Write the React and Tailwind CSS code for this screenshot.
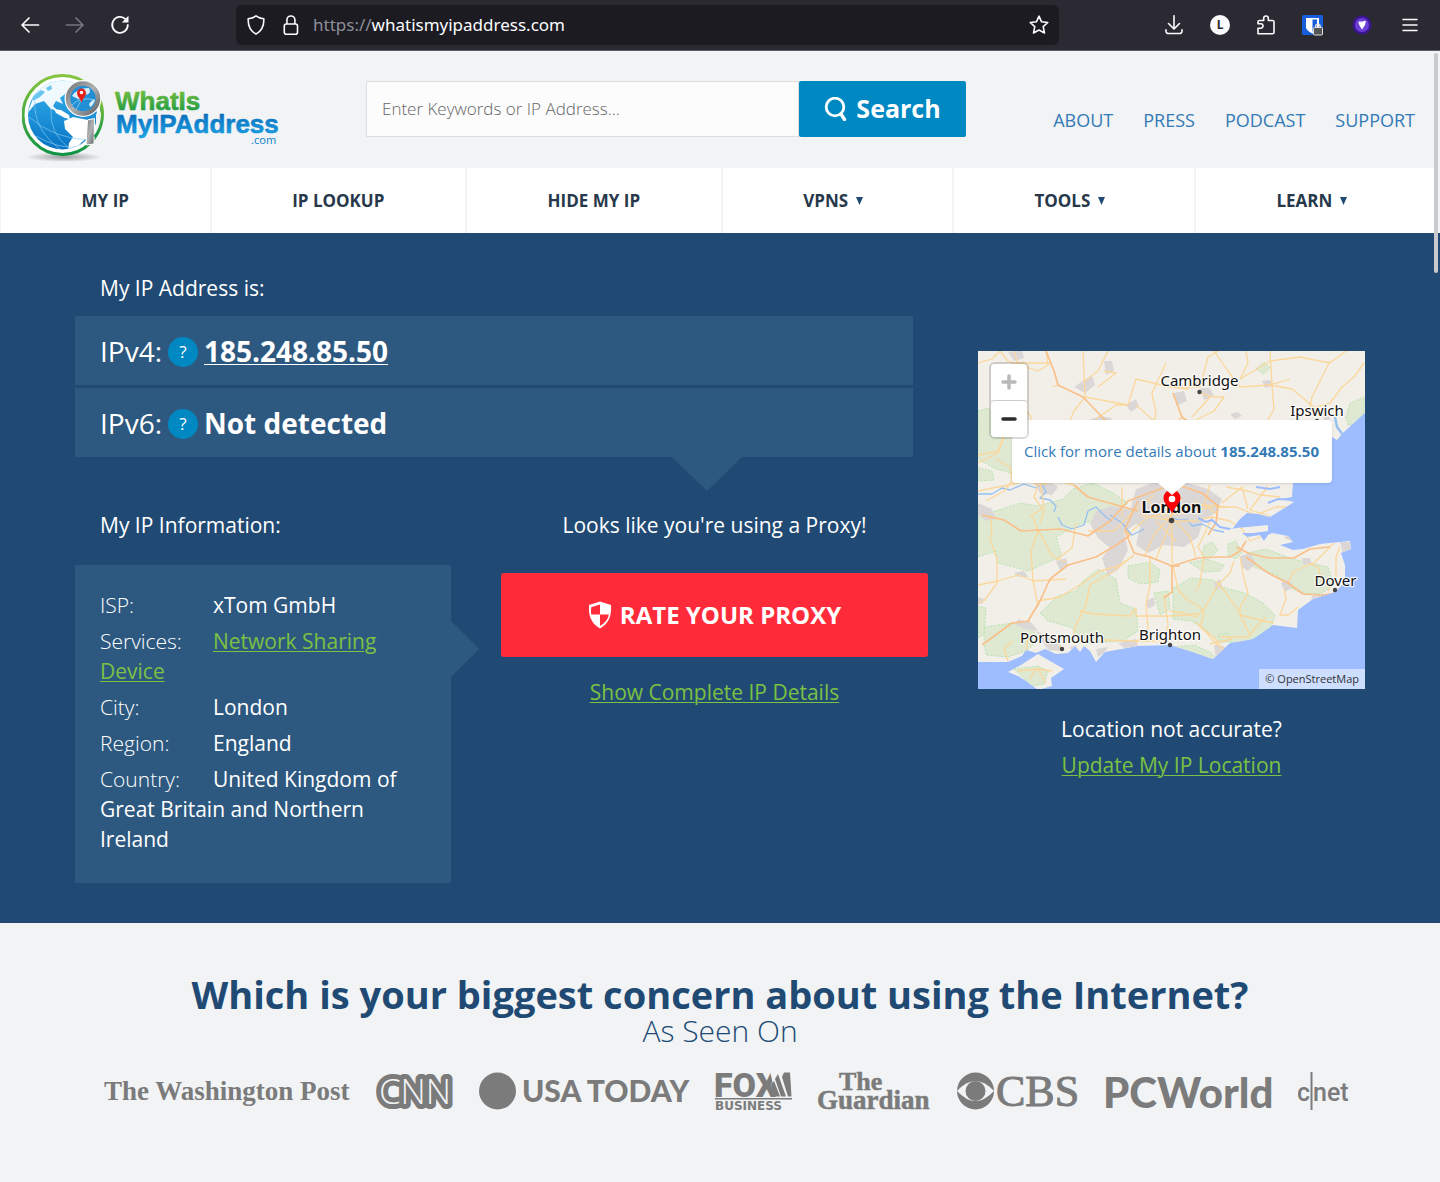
import React from "react";

const SANS = "font-['Open_Sans','Noto_Sans',sans-serif]";

function BrowserBar() {
  return (
    <div className="flex h-[51px] items-center border-b border-[#5b5a6b] bg-[#2b2a33] font-['Noto_Sans',sans-serif] text-[#fbfbfe]">
      <div className="flex w-[236px] shrink-0 items-center gap-[25px] pl-5">
        <button aria-label="Back" className="size-5">
          <svg viewBox="0 0 20 20" fill="none" stroke="currentColor" strokeWidth="1.7" strokeLinecap="round" strokeLinejoin="round">
            <path d="M18.500 10H2M9 3L2 10l7 7" />
          </svg>
        </button>
        <button aria-label="Forward" className="size-5 text-[#77767f]">
          <svg viewBox="0 0 20 20" fill="none" stroke="currentColor" strokeWidth="1.7" strokeLinecap="round" strokeLinejoin="round">
            <path d="M1.500 10H18M11 3l7 7-7 7" />
          </svg>
        </button>
        <button aria-label="Reload" className="size-5">
          <svg viewBox="0 0 20 20" fill="none" stroke="currentColor" strokeWidth="1.8" strokeLinecap="round">
            <path d="M15.500 4.200A7.800 8 0 1 0 17.800 10" />
            <path d="M18.500 .8v6.700h-6.700z" fill="currentColor" stroke="none" />
          </svg>
        </button>
      </div>
      <div className="flex h-10 min-w-0 flex-1 items-center rounded-md bg-[#1c1b22] px-[10px]">
        <svg className="size-5 shrink-0" viewBox="0 0 20 20" fill="none" stroke="currentColor" strokeWidth="1.600" strokeLinejoin="round">
          <path d="M10 .9c2.300 1.800 5 2.600 7.800 2.900.3 6.800-2 12.200-7.800 15.300C4.200 16 1.900 10.600 2.200 3.800 5 3.500 7.700 2.700 10 .9z" />
        </svg>
        <svg className="ml-[15px] size-5 shrink-0" viewBox="0 0 20 20" fill="none" stroke="currentColor" strokeWidth="1.600">
          <rect x="3.300" y="9" width="13.200" height="10.200" rx="2" />
          <path d="M5.900 9V5a4 4 0 0 1 8 0v4" />
        </svg>
        <div className="ml-3 flex-1 truncate text-[17px] leading-6">
          <span className="text-[#8f8e99]">https://</span>whatismyipaddress.com
        </div>
        <button aria-label="Bookmark this page" className="size-5 shrink-0">
          <svg viewBox="0 0 20 20" fill="none" stroke="currentColor" strokeWidth="1.600" strokeLinejoin="round">
            <path d="M10 1.200l2.600 5.600 6.200.7-4.600 4.200 1.300 6.300L10 15l-5.500 3 1.300-6.300L1.200 7.500l6.200-.7z" />
          </svg>
        </button>
      </div>
      <div className="flex shrink-0 items-center gap-[26px] pl-[105px] pr-5">
        <button aria-label="Downloads" className="size-5">
          <svg viewBox="0 0 20 20" fill="none" stroke="currentColor" strokeWidth="1.600" strokeLinecap="round" strokeLinejoin="round">
            <path d="M10 .8v13M4.500 8.500l5.500 5.500 5.500-5.500M2 14.800v1.400a2.300 2.300 0 0 0 2.300 2.300h11.400a2.300 2.300 0 0 0 2.300-2.300v-1.400" />
          </svg>
        </button>
        <button aria-label="Account" className="size-5 rounded-full bg-[#fbfbfe] text-[12px] font-bold leading-5 text-[#2b2a33]">L</button>
        <button aria-label="Extensions" className="size-5">
          <svg viewBox="0 0 20 20" fill="none" stroke="currentColor" strokeWidth="1.600" strokeLinejoin="round">
            <path d="M2 18.700V13.200h2.800a2.200 2.200 0 0 0 0-4.400H2V7a1.500 1.500 0 0 1 1.500-1.500h4.200V3.300a2.300 2.300 0 0 1 4.600 0v2.200h4.200A1.500 1.500 0 0 1 18 7v10.200a1.500 1.500 0 0 1-1.500 1.500z" />
          </svg>
        </button>
        <button aria-label="Password manager" className="size-[21px]">
          <svg viewBox="0 0 21 21">
            <rect width="21" height="20" rx="1.500" fill="#175ddc" />
            <path d="M4 3h13v9c0 3-4 5.500-6.500 6.500C8 17.500 4 15 4 12z" fill="#fff" />
            <path d="M10.500 4.500H15V12c0 1.500-2 3.200-4.500 4.500z" fill="#175ddc" />
            <rect x="11.500" y="12.500" width="9" height="7.500" rx="1" fill="#555" stroke="#ddd" />
            <path d="M13.600 12.500v-1a2.300 2.300 0 0 1 4.600 0v1" fill="none" stroke="#ddd" strokeWidth="1.400" />
          </svg>
        </button>
        <button aria-label="VPN extension" className="ml-[3px] size-5">
          <svg viewBox="0 0 20 20">
            <circle cx="10" cy="10" r="9.500" fill="#3b1693" />
            <circle cx="10" cy="10" r="7" fill="#6c3fd6" />
            <path d="M6.800 7q3.500.6 6.600-.8-.3 4.400-3.400 7.600Q7.600 10.600 6.800 7z" fill="#fff" stroke="#fff" strokeLinejoin="round" />
          </svg>
        </button>
        <button aria-label="Application menu" className="ml-0.5 size-5">
          <svg viewBox="0 0 20 20" fill="none" stroke="currentColor" strokeWidth="1.500" strokeLinecap="round">
            <path d="M3 4.500h14M3 10h14M3 15.500h14" />
          </svg>
        </button>
      </div>
    </div>
  );
}

function SiteLogo() {
  return (
    <a href="#home" aria-label="WhatIsMyIPAddress.com" className="block w-[260px] shrink-0">
      <svg viewBox="0 0 260 90" className="h-[90px] w-[260px]">
        <defs>
          <linearGradient id="lgGreen" x1="0" y1="0" x2="0" y2="1">
            <stop offset="0" stopColor="#86c440" />
            <stop offset="1" stopColor="#0f9444" />
          </linearGradient>
          <linearGradient id="lgBlue" x1="0" y1="0" x2="0" y2="1">
            <stop offset="0.150" stopColor="#0b6fbd" />
            <stop offset="1" stopColor="#1ba4e6" />
          </linearGradient>
          <linearGradient id="lgSea" x1="0" y1="0" x2="0" y2="1">
            <stop offset="0" stopColor="#35b3ee" />
            <stop offset="1" stopColor="#0873c4" />
          </linearGradient>
          <linearGradient id="lgMetal" x1="0" y1="0" x2="1" y2="1">
            <stop offset="0" stopColor="#75777a" />
            <stop offset="0.500" stopColor="#b0b2b4" />
            <stop offset="1" stopColor="#606265" />
          </linearGradient>
          <radialGradient id="lgShadow">
            <stop offset="0" stopColor="#777" stopOpacity="0.700" />
            <stop offset="1" stopColor="#777" stopOpacity="0" />
          </radialGradient>
          <clipPath id="globeClip"><circle cx="40.500" cy="41" r="34.500" /></clipPath>
        </defs>
        <ellipse cx="42" cy="83" rx="38" ry="5" fill="url(#lgShadow)" />
        <circle cx="40.500" cy="41" r="39.500" fill="#fff" stroke="url(#lgGreen)" strokeWidth="3" />
        <circle cx="40.500" cy="41" r="34.500" fill="url(#lgSea)" />
        <g clipPath="url(#globeClip)">
          <path d="M10 27Q14 13 27 7 42 2 56 8L47 15 43 20 38 24 41 30 34 27 31 32 36 37 29 35 22 27 13 30 5 40z" fill="#fff" opacity="0.930" />
          <path d="M11 22l8-6 4 2-5 5-7 4zM24 14l5-3 1 4-4 2z" fill="#6cc5ef" />
          <path d="M32 35l7 1 8 5 1 4-5-1-9-5z" fill="#fff" />
          <path d="M42 47l9-4 15 3 10 6-8 10-8 6-9 10-5-1 1-8 4-6-8-8z" fill="#fff" />
          <g fill="none" stroke="#8bd0f3" strokeWidth="0.800" opacity="0.800">
            <path d="M7 43q25 22 60 23M14 62q22 13 42 11M13 27q-2 28 25 48M29 35q-2 24 18 39" />
          </g>
        </g>
        <path d="M74 40l12-4v32l-12 4z" fill="#f1f3f5" />
        <path d="M65.500 46l7-1.500L72 70l-8 1z" fill="url(#lgMetal)" stroke="#fff" strokeWidth="1" />
        <path d="M78 26A39.500 39.500 0 0 1 73 63" fill="none" stroke="url(#lgGreen)" strokeWidth="3" />
        <circle cx="61" cy="24.500" r="18.500" fill="#fff" />
        <circle cx="61" cy="24.500" r="15" fill="#218fd5" stroke="url(#lgMetal)" strokeWidth="4.500" />
        <path d="M50 22q5-8 17-8 3 6-4 7-2 5-7 4zM67 30q4-5 6-4-2 6-5 7z" fill="#d9effa" />
        <path d="M50 31q9-9 23-5M54 36q5-12 14-21" fill="none" stroke="#a9dcf5" strokeWidth="0.700" />
        <path d="M59.500 29c-1-5-4.500-6-4.500-10a4.500 4.500 0 0 1 9 0c0 4-3.500 5-4.500 10z" fill="#e32119" />
        <circle cx="59.500" cy="18.500" r="1.800" fill="#fff" />
        <g fontFamily="Liberation Sans, Arial, sans-serif" fontWeight="700" strokeWidth="0.600" strokeLinejoin="round">
          <text x="93" y="36" fontSize="26" fill="url(#lgGreen)" stroke="url(#lgGreen)">WhatIs</text>
          <text x="94" y="59" fontSize="26" fill="url(#lgBlue)" stroke="url(#lgBlue)">MyIPAddress</text>
        </g>
        <text x="229" y="70" fontSize="11" fontFamily="Noto Sans, sans-serif" fill="#1587cf">.com</text>
      </svg>
    </a>
  );
}

function Header() {
  return (
    <header className="flex h-[117px] items-start bg-[#f1f3f5]">
      <div className="pl-[22px] pt-[23px]">
        <SiteLogo />
      </div>
      <form className="ml-[84px] mt-[30px] flex h-14 max-w-[600px] flex-1" onSubmit={(e) => e.preventDefault()}>
        <input
          aria-label="Enter Keywords or IP Address"
          placeholder="Enter Keywords or IP Address..."
          className="min-w-0 flex-1 border border-[#dddddd] bg-[#fcfcfc] px-[15px] text-[17px] font-light text-[#333] placeholder:text-[#666]"
        />
        <button className="flex w-[167px] items-center justify-center gap-2 rounded-[2px] bg-[#0088c2] text-[25px] font-bold text-white">
          <svg className="size-6" viewBox="0 0 24 24" fill="none" stroke="currentColor" strokeLinecap="round">
            <ellipse cx="11" cy="10" rx="8.800" ry="8.800" strokeWidth="2.800" />
            <path d="M17 17l3.500 5.500" strokeWidth="3.400" />
          </svg>
          Search
        </button>
      </form>
      <nav aria-label="Secondary" className="ml-auto flex gap-[30px] pr-[25px] pt-[57px] text-[18px] font-medium leading-6 text-[#337ab7]">
        <a href="#about">ABOUT</a>
        <a href="#press">PRESS</a>
        <a href="#podcast">PODCAST</a>
        <a href="#support">SUPPORT</a>
      </nav>
    </header>
  );
}

const MENU = [
  ["MY IP", false],
  ["IP LOOKUP", false],
  ["HIDE MY IP", false],
  ["VPNS", true],
  ["TOOLS", true],
  ["LEARN", true],
];

function MainNav() {
  return (
    <nav aria-label="Main" className="flex h-[65px] gap-0.5 bg-[#f1f3f5] px-px pr-1 text-[17px] font-bold text-[#27384b]">
      {MENU.map(([label, menu]) => (
        <a key={label} href="#menu" className="flex flex-auto items-center justify-center bg-white pt-px">
          {label}
          {menu && (
            <svg className="ml-2 mr-2 h-2 w-[7px] text-[#204a73]" viewBox="0 0 7 8">
              <path d="M0 0h7L3.500 8z" fill="currentColor" />
            </svg>
          )}
        </a>
      ))}
    </nav>
  );
}

function Help({ label }) {
  return (
    <button aria-label={label} className="mx-1.5 mt-0.5 size-[30px] rounded-full bg-[#0088c2] text-[17px] leading-[30px]">?</button>
  );
}

function InfoRow({ label, children }) {
  return (
    <p>
      <span className="inline-block w-[113px] font-light">{label}</span>
      {children}
    </p>
  );
}

const GREENS = [
  "M0 60L10 57 22 70 40 82 50 108 34 122 18 118 0 108z",
  "M0 117l14 3 2 9-16 1z",
  "M18 160L42 152 60 155 85 148 95 138 115 132 135 142 150 152 130 168 104 172 78 186 84 205 50 220 20 212 18 200 0 206 0 166z",
  "M62 262L80 245 98 240 105 230 120 218 138 228 142 252 158 258 160 280 145 290 110 292 92 276 70 270z",
  "M6 276L35 272 52 276 62 288 48 300 30 306 8 304 6 290z",
  "M150 215l22-4 10 8-2 12-18 2-12-6z",
  "M0 255l8 2-2 26-6 4z",
  "M195 237l18-10 22 2 12 8 20 5 18 10 12 12-4 12-14 10-16 6-24-2-12-12-14-8-18-2z",
  "M212 212l16-4 18 6-4 6-16 1z",
  "M250 193l8-3 6 12-6 6-8-4z",
  "M270 202l18-4 26 10 18 4 18 4 6 18-12 8-16 2-18-8-12-12-22-8z",
  "M196 296l20-2 18 8 3 6-8 0-33-8z",
  "M240 284l10-2 2 6-8 4z",
  "M368 66l4-14 14-6v16l-8 10-8 2z",
  "M278 18l8-7 6 6-6 6z",
  "M36 318l24-3 10 5-4 13-12 2-10-10z",
  "M226 195l8-4 6 8-8 8-8-2z",
  "M176 242l14-2 2 18-10 6z",
];

const URBAN = [
  "M158 138l22-8 30 2 20 6 14 10-6 14-12 6-6 18-14 10-20-2-16 8-12-8 4-18 -10-8 2-16z",
  "M118 160l16-5 20 4 4 14-12 8 4 18-10 20-10 6-6-18 8-10-12-10 -8-14z",
  "M56 132l12-4 12 8-6 8-12-2z",
  "M30 1l14-2 2 8-10 3z",
  "M96 36l18-12 3 10-10 8z",
  "M126 10l8 0 2 10-8 4z",
  "M148 54l10-6 3 7-8 6z",
  "M108 70l14-5 12 2-8 10-14 0z",
  "M222 37l10 0 4 8-10 4z",
  "M284 30l8-1 3 6-8 2z",
  "M0 152l14 6 4 10-10 2-8-6z",
  "M78 210l10-3 2 8-8 4z",
  "M40 268l14 4 6 8-14-2-8-4z",
  "M58 280l20 8 6 12-14-1z",
  "M36 222l10-2 4 6-10 0z",
  "M0 246l6 2-2 5-4 0z",
  "M140 292l18-4 2 8-14 1z",
  "M118 298l12-2-4 6-6 4z",
  "M262 205l10-3 6 10-8 8-6-4z",
  "M303 232l8-4 4 8-8 5z",
  "M324 207l8 0 2 5-8 2z",
  "M236 232l6-4 2 8-6 3z",
  "M362 191l10 0 1 8-8 4z",
  "M236 294l10 1 2 7-10 6z",
  "M334 245l12-2-4 5-9 3z",
  "M206 146l14-2 8 8-10 8z",
  "M196 42l10-2 3 10-9 4z",
  "M252 63l8-2 4 4-7 3z",
  "M168 250l8-4 1 8-7 4z",
  "M92 296l6-2 2 5-6 2z",
  "M345 66l6-2 2 6-6 2z",
  "M312 182l8 1-6 7-8-3z",
];

const MOTORWAYS = [
  "M4 164L26 169 43 180 83 178 110 185 132 170 150 150 190 135",
  "M50 270L62 250 72 228 90 214 118 206 140 193 152 184 147 178 160 150",
  "M147 180L156 202 172 206 194 215 220 207 240 206 252 206 262 200 268 190",
  "M68 0L76 20 80 34 105 46 126 68 150 90",
  "M268 206L290 222 310 232 325 243 345 244 357 242",
  "M194 215l0 26-8 6 M192 215l10 0",
  "M258 196L270 202 290 207 316 207 332 198 352 196",
  "M195 42L204 66 212 72 M200 134L224 142 240 155 238 172 230 184",
  "M96 134L110 146 124 150 160 160",
  "M52 270l-18 2-30 22",
];

const ROADS = [
  "M0 12L14 8 22 0 M22 0L30 10 60 20 70 14 68 0",
  "M12 164L14 180 12 188 19 208 19 232 6 250 0 252 M0 234L20 230 40 224 56 230 88 228",
  "M55 166L60 180 53 200 55 230 60 254 50 270 M58 175l16 30 14 6",
  "M98 172l-4 25-16 12",
  "M60 250L82 246 105 232 122 220 140 215 155 205",
  "M28 36L52 64 60 100 62 132 66 156 52 166",
  "M80 34L74 36 M36 0l8 28 4 42 8 12 M40 12l32 0",
  "M105 0L107 46 96 60 90 74 M107 30L120 20 130 0",
  "M120 36L138 22 126 20 M107 46L150 54 158 28 192 36 210 38 220 30",
  "M150 54l-12 0-20 14 M158 54l18 16 2-8-4-20 14-30",
  "M0 104l20-4 6-16 12-10 M0 112l20-10 8-22 20-18",
  "M18 108l14 8 2 14-8 10-18 10 M0 140l30-6 20-4 10 4 20-4 16 4",
  "M60 134l-4 12 10 14-4 12 M110 180l26 0 20-20 20-16",
  "M144 166l0-30 M154 180l16-14 20-4 36-8 24 2",
  "M156 204l-20 16-24 14-4 20-10 20-4 16",
  "M102 260l14 3 36 2 6-8 0 8 34 0 28-2 ",
  "M172 204l0 30-4 20 2 24-12 14",
  "M125 289l30 1 36 0",
  "M186 244l4 30-4 18 M192 260l14 2 12 4 8-8 14-24 12-12 4-12",
  "M194 166l0 44 6 28 8 10 14 8 4 6-4 14 14 10 10 14",
  "M194 170l20 0 20-4 18 4 12 8",
  "M182 150l10 14 20 22 6 20 M204 146l-10 18-18 20-10 22 M194 164l40-8",
  "M162 164l30 5 M170 150l20 18 M178 208l16-40 M220 150l-26 14 M178 170l20 20",
  "M234 166l-8 18-6 12 6 10-4 26-4 8 M240 156l18 0 20 8 20-8 16 0",
  "M232 134l-6 20 14 10 M248 136l22 4 12 4 20 2",
  "M244 152l20-16 6 22 M290 135l-18 24 20 6",
  "M262 206l4 22 4 14-8 14 0 8 10 20 M238 230l10 12 14 20",
  "M264 178l8 12 20-8 8-10 M242 286l28 0 8-10 10-10",
  "M262 264l24 6 10 2 M306 238l2 10-6 16 8 0 10-8 M310 232l6-12 20-8 20-20",
  "M240 295l-12-14-10-10 M232 293l22-5",
  "M362 196l-4 10 0 20-8 14 M330 212l10 4 4 14",
  "M192 36L222 36 230 6 240 0 M236 0l14 20 12 16 30-2 22 4 24 20",
  "M262 28l30-18 30-4 30 6 16-12 M292 0l2 34 2 24-8 14 M352 10l-18 36-4 20",
  "M232 46l-18 20 M222 42l14 4 10 0 -10 14-20 10",
  "M204 66l-4 4 M338 56l14-4 12-16 12-10 10-14 M262 28l8-16-2-12",
  "M30 310l-4-12 8-8 M84 300l-4-10-10-6 M48 300l2-14",
  "M40 320l20-2 14 2 M60 318l8 14 M58 318l-6 10",
  "M338 62l10 4 M292 34l20-6",
];

const PLACES = [
  ["Cambridge", 221.500, 35, 221.500, 41],
  ["Ipswich", 339, 65, 339, 70],
  ["Dover", 357.500, 235, 357, 239],
  ["Portsmouth", 84, 292, 84, 298],
  ["Brighton", 192, 289, 192, 294],
];

function MapArt() {
  return (
    <svg viewBox="0 0 387 338" preserveAspectRatio="xMidYMid slice" className="size-full" role="img" aria-label="Map of south-east England">
      <defs>
        <clipPath id="landClip">
          <path d="M0 0H387V62L382 66 365 82 359 89 354 86 345 100 330 118 315 132 314 146 303 148 316 151 305 158 292 166 280 163 269 162 262 168 255 177 245 179 259 177 290 174 290 180 276 182 264 182 269 186 282 184 286 190 290 184 294 182 310 185 315 191 302 194 315 199 325 198 342 193 372 190 373 198 363 202 367 214 367 231 357 241 335 248 320 259 319 277 295 274 275 288 252 292 235 308 212 300 192 294 160 295 127 301 118 311 112 300 106 295 102 301 97 295 90 302 78 303 67 298 58 302 48 299 44 305 30 311 0 311z" />
          <path d="M30 321l13-7 17-11 12 7 14 8-13 9 1 8-14 4-12-9-8-5z" />
        </clipPath>
      </defs>
      <rect width="387" height="338" fill="#9dbdff" />
      <g clipPath="url(#landClip)">
        <rect width="387" height="338" fill="#f2efe9" />
        <g fill="#dfe9d2" stroke="#a9dfa5" strokeWidth="0.800" strokeDasharray="2 1.500">
          {GREENS.map((d) => <path key={d} d={d} />)}
        </g>
        <g fill="#dcd7d7">
          {URBAN.map((d) => <path key={d} d={d} />)}
        </g>
        <g fill="none" stroke="#94c0f2" strokeWidth="1.300" strokeLinejoin="round">
          <path d="M0 143l14 0 10-6 8 2 14-6 12 4 6-4 4 8-6 6 10 2 6 6-2 6 M80 166l4 8 10 4 12-4 4-14 8-4 10 10 6 4 M132 164l12 8 10 12 12-6 M192 165l8 4 10 0 4 6 10-2 12 6 10 2" />
          <path d="M357 66l2 10 6 8" strokeWidth="2.500" />
        </g>
        <g fill="none" stroke="#fbd79b" strokeWidth="1.300" strokeLinejoin="round">
          {ROADS.map((d) => <path key={d} d={d} />)}
        </g>
        <g fill="none" stroke="#f9c089" strokeWidth="1.700" strokeLinejoin="round">
          {MOTORWAYS.map((d) => <path key={d} d={d} />)}
        </g>
      </g>
      <g fill="none" stroke="#9dbdff" strokeWidth="2">
        <path d="M220 167l8 4 6-2 8 7 10 2 M290 152l10-4 18 1 M278 136l14 2 10-2" />
      </g>
      <g fontFamily="Noto Sans, sans-serif" fontSize="15" textAnchor="middle" fill="#111" stroke="#fff" strokeWidth="2.500" strokeOpacity="0.800" strokeLinejoin="round" paintOrder="stroke">
        {PLACES.map(([name, x, y, dx, dy]) => (
          <g key={name}>
            <circle cx={dx} cy={dy} r="2.200" fill="#444" stroke="none" />
            <text x={x} y={y}>{name}</text>
          </g>
        ))}
        <circle cx="193.500" cy="169.500" r="2.800" fill="#444" stroke="none" />
        <text x="193.500" y="162" fontSize="16" fontWeight="700">London</text>
      </g>
    </svg>
  );
}

function LocationMap() {
  return (
    <div className="relative h-[338px] overflow-hidden bg-[#9dbdff]">
      <MapArt />
      <svg className="absolute left-1/2 top-[138px] h-[26px] w-[18px] -translate-x-1/2" viewBox="0 0 18 26">
        <path d="M9 25C7 18 .5 15 .5 9a8.500 8.500 0 0 1 17 0c0 6-6.500 9-8.500 16z" fill="#fb0207" />
        <circle cx="9" cy="10" r="3.300" fill="#fff" />
      </svg>
      <div className="absolute left-1/2 top-[69px] w-80 -translate-x-1/2">
        <a href="#details" className="block whitespace-nowrap rounded bg-white text-center text-[15px] leading-[63px] text-[#337ab7] shadow-sm">
          Click for more details about <b>185.248.85.50</b>
        </a>
        <svg className="mx-auto block h-3 w-7" viewBox="0 0 28 12"><path d="M0 0h28L14 12z" fill="#fff" /></svg>
      </div>
      <div className="absolute left-[11px] top-[11px] w-10 rounded-md border-2 border-black/15">
        <button aria-label="Zoom in" className="flex h-9 w-full items-center justify-center rounded-t bg-white text-[#b9b9b9]">
          <svg className="size-4" viewBox="0 0 16 16" stroke="currentColor" strokeWidth="3.500" strokeLinecap="round"><path d="M2 8h12M8 2v12" /></svg>
        </button>
        <button aria-label="Zoom out" className="flex h-[37px] w-full items-center justify-center rounded border-t border-[#ccc] bg-white text-[#2b2b2b]">
          <svg className="size-4" viewBox="0 0 16 16" stroke="currentColor" strokeWidth="3.500" strokeLinecap="round"><path d="M2 8h12" /></svg>
        </button>
      </div>
      <a href="#osm" className="absolute bottom-0 right-0 bg-white/50 px-1.5 text-[11px] leading-5 text-[#333]">© OpenStreetMap</a>
    </div>
  );
}

const GREEN_LINK = "text-[#7bc143] underline decoration-1 underline-offset-2";

function Hero() {
  return (
    <section className="grid grid-cols-[minmax(0,853fr)_minmax(0,387fr)] gap-[50px] bg-[#204a73] px-[75px] pb-10 pt-10 text-[21px] leading-[30px] text-white">
      <div>
        <h2 className="pl-[25px]">My IP Address is:</h2>
        <div className="relative mr-[15px] mt-[13px] flex flex-col gap-[3px] text-[28px]">
          <p className="flex h-[69px] items-center bg-[#2d5980] pl-[25px]">
            IPv4:<Help label="What is IPv4?" />
            <a href="#ipv4" className="font-bold underline decoration-1 underline-offset-2">185.248.85.50</a>
          </p>
          <p className="flex h-[69px] items-center bg-[#2d5980] pl-[25px]">
            IPv6:<Help label="What is IPv6?" />
            <b>Not detected</b>
          </p>
          <svg className="absolute right-[171px] top-full h-[34px] w-[70px]" viewBox="0 0 70 34">
            <path d="M0 0h70L35 34z" fill="#2d5980" />
          </svg>
        </div>
        <div className="mt-[53px] grid grid-cols-[minmax(0,376fr)_minmax(0,427fr)] gap-[50px]">
          <div>
            <h2 className="pl-[25px]">My IP Information:</h2>
            <div className="relative mt-[25px] flex flex-col gap-1.5 bg-[#2d5980] px-[25px] pb-[29px] pt-[25px]">
              <InfoRow label="ISP:">xTom GmbH</InfoRow>
              <InfoRow label="Services:"><a href="#services" className={GREEN_LINK}>Network Sharing Device</a></InfoRow>
              <InfoRow label="City:">London</InfoRow>
              <InfoRow label="Region:">England</InfoRow>
              <InfoRow label="Country:">United Kingdom of Great Britain and Northern Ireland</InfoRow>
              <svg className="absolute left-full top-14 h-14 w-7" viewBox="0 0 28 56">
                <path d="M0 0v56L28 28z" fill="#2d5980" />
              </svg>
            </div>
          </div>
          <div className="flex flex-col items-center">
            <h2>Looks like you're using a Proxy!</h2>
            <button className="mt-[33px] flex h-[84px] w-full items-center justify-center gap-2 rounded-[3px] bg-[#ff2b3a] text-[24px] font-bold">
              <svg className="h-7 w-6" viewBox="0 0 24 28">
                <path d="M12 .5L23 4c.6 10-1.500 18-11 23.500C2.500 22 .4 14 1 4z" fill="#fff" />
                <path d="M12 3.500v10H3.200C3 11 3 9 3.200 6.200zM12 13.500h8.800C20 18.500 17 22 12 25z" fill="#ff2b3a" />
              </svg>
              RATE YOUR PROXY
            </button>
            <a href="#details" className={`mt-5 ${GREEN_LINK}`}>Show Complete IP Details</a>
          </div>
        </div>
      </div>
      <div className="pt-[78px] text-center">
        <LocationMap />
        <p className="mt-[25px]">Location not accurate?</p>
        <a href="#update" className={`mt-1.5 inline-block ${GREEN_LINK}`}>Update My IP Location</a>
      </div>
    </section>
  );
}

function PressLogos() {
  return (
    <ul className="flex flex-wrap items-center justify-center gap-[25px] pl-3.5 text-[#7b7b7b]">
      <li>
        <svg className="h-10 w-[247px]" viewBox="0 0 247 40" fill="currentColor">
          <text x="0" y="29" fontFamily="Liberation Serif, serif" fontWeight="700" fontSize="27">The Washington Post</text>
        </svg>
      </li>
      <li>
        <svg className="h-10 w-[78px]" viewBox="0 0 78 40" role="img" aria-label="CNN">
          <defs>
            <text id="cnn" x="39" y="33" textAnchor="middle" fontFamily="Open Sans, sans-serif" fontWeight="300" fontSize="35">CNN</text>
          </defs>
          <use href="#cnn" fill="#7b7b7b" stroke="#7b7b7b" strokeWidth="10" strokeLinejoin="round" />
          <use href="#cnn" fill="#f1f3f5" />
        </svg>
      </li>
      <li>
        <svg className="h-10 w-[211px]" viewBox="0 0 211 40" fill="currentColor">
          <circle cx="18.500" cy="20" r="18.500" />
          <text x="43" y="31" fontFamily="Lato, sans-serif" fontWeight="900" fontSize="30">USA TODAY</text>
        </svg>
      </li>
      <li>
        <svg className="h-10 w-[77px]" viewBox="0 0 77 40" fill="currentColor">
          <text x="-1" y="25.500" fontFamily="Roboto, sans-serif" fontWeight="900" fontSize="34">FOX</text>
          <path d="M55 0h22v27h-16z" fill="#f1f3f5" />
          <path d="M56 13l3-3 6 15.500h-8zM60 8l3-5 8 22.500h-5zM69 1.500h6l1.500 24H73L67 6z" />
          <path d="M0 27h77v1.500H0z" />
          <text x="0" y="39" fontFamily="DejaVu Sans, sans-serif" fontWeight="700" fontSize="12">BUSINESS</text>
        </svg>
      </li>
      <li>
        <svg className="h-10 w-[115px]" viewBox="0 0 115 40" fill="currentColor" stroke="currentColor" strokeWidth="0.500" fontFamily="Liberation Serif, serif" fontWeight="700">
          <text x="22" y="19" fontSize="26">The</text>
          <text x="0" y="38" fontSize="27">Guardian</text>
        </svg>
      </li>
      <li>
        <svg className="h-10 w-[123px]" viewBox="0 0 123 40" fill="currentColor">
          <circle cx="18.500" cy="20" r="18.500" />
          <path d="M0 20Q18.500 0 37 20 18.500 40 0 20z" fill="#f1f3f5" />
          <circle cx="18.500" cy="20" r="10" />
          <text x="39" y="35" fontFamily="Liberation Serif, serif" fontSize="44" stroke="currentColor" strokeWidth="1">CBS</text>
        </svg>
      </li>
      <li>
        <svg className="h-10 w-[168px]" viewBox="0 0 168 40" fill="currentColor">
          <text x="-2" y="37" fontFamily="Lato, sans-serif" fontWeight="900" fontSize="42">PCWorld</text>
        </svg>
      </li>
      <li>
        <svg className="h-10 w-[52px]" viewBox="0 0 52 40" fill="currentColor" fontFamily="Roboto, sans-serif" fontSize="25" fontWeight="500">
          <text x="-1" y="30">c</text>
          <path d="M12.500 1h2v38h-2z" />
          <text x="15" y="30">net</text>
        </svg>
      </li>
    </ul>
  );
}

export default function App() {
  return (
    <div className={`relative min-h-screen bg-[#f1f3f5] ${SANS}`}>
      <BrowserBar />
      <Header />
      <MainNav />
      <Hero />
      <section className="pb-[71px] pt-12 text-center text-[#204a73]">
        <h2 className="text-[38px] font-bold leading-[46px]">Which is your biggest concern about using the Internet?</h2>
        <p className="mb-[26px] text-[30px] font-light leading-7">As Seen On</p>
        <PressLogos />
      </section>
      <div className="absolute right-[2px] top-[53px] h-[220px] w-1 rounded-full bg-[#c9cacc]" />
    </div>
  );
}
